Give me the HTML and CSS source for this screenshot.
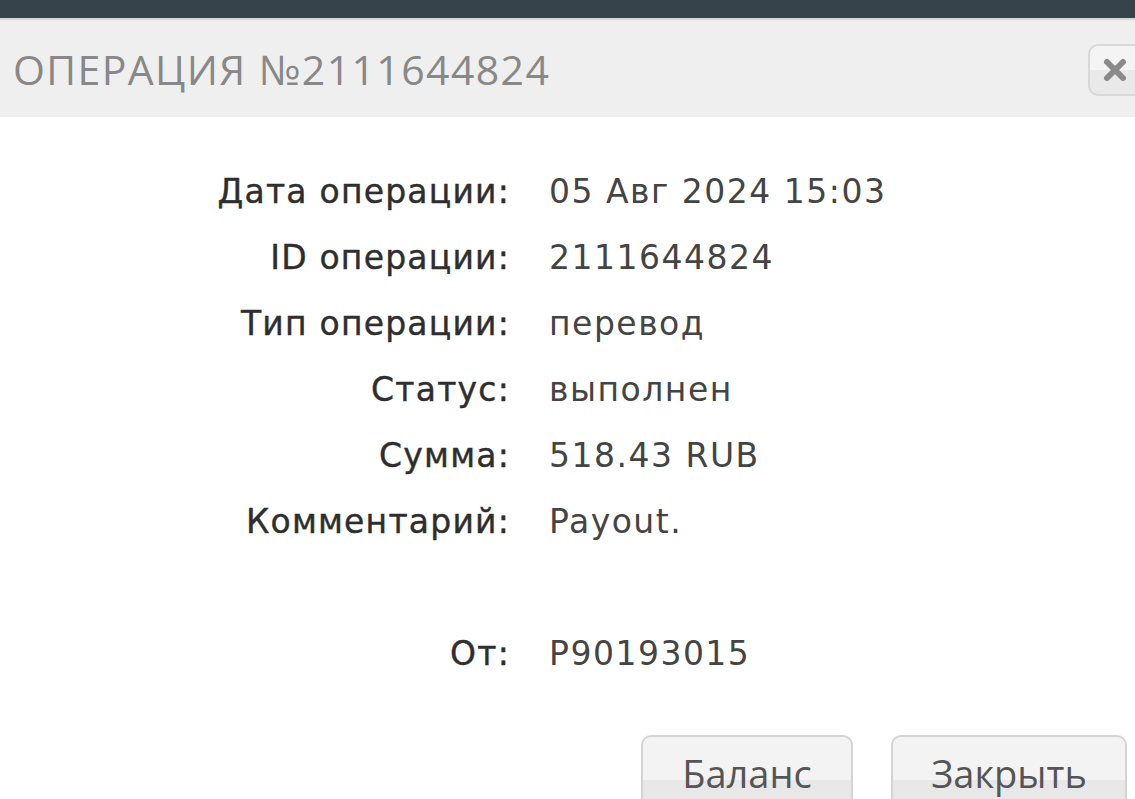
FILE: index.html
```html
<!DOCTYPE html>
<html>
<head>
    <meta charset="utf-8">
    <title>Операция №2111644824</title>
    <link rel="stylesheet" href="styles.css">
</head>
<body>

<div class="topbar"></div>

<div class="modal-header">
    <h1 class="modal-title">ОПЕРАЦИЯ №2111644824</h1>
    <button class="close-btn" title="Закрыть">
        <svg width="26" height="26" viewBox="0 0 26 26">
            <path d="M5 5 L21 21 M21 5 L5 21" stroke="#8a8a8a" stroke-width="6" stroke-linecap="round"/>
        </svg>
    </button>
</div>

<div class="modal-body">
    <dl class="details">
        <dt>Дата операции:</dt>
        <dd>05 Авг 2024 15:03</dd>
        <dt>ID операции:</dt>
        <dd>2111644824</dd>
        <dt>Тип операции:</dt>
        <dd>перевод</dd>
        <dt>Статус:</dt>
        <dd>выполнен</dd>
        <dt>Сумма:</dt>
        <dd>518.43 RUB</dd>
        <dt>Комментарий:</dt>
        <dd>Payout.</dd>
        <dt class="spacer">&nbsp;</dt>
        <dd class="spacer">&nbsp;</dd>
        <dt>От:</dt>
        <dd>P90193015</dd>
    </dl>

    <div class="actions">
        <button class="btn btn-balance">Баланс</button>
        <button class="btn btn-close">Закрыть</button>
    </div>
</div>

</body>
</html>
```

FILE: styles.css
```css
html, body {
    margin: 0;
    padding: 0;
    background: #fff;
    overflow: hidden;
}
body {
    font-family: "DejaVu Sans", "Liberation Sans", sans-serif;
}
.topbar {
    height: 18px;
    background: #36434b;
}
.modal-header {
    display: flex;
    align-items: center;
    justify-content: space-between;
    height: 97px;
    background: #efefef;
    border-top: 2px solid #d6d6d6;
    padding-left: 13px;
}
.modal-title {
    margin: 0;
    font-family: "Open Sans", sans-serif;
    font-weight: 400;
    font-size: 41px;
    letter-spacing: 1.4px;
    color: #888;
}
.close-btn {
    width: 56px;
    height: 52px;
    margin-right: -9px;
    margin-top: 2px;
    padding: 0 0 0 12px;
    display: flex;
    align-items: center;
    border: 2px solid #d8d8d8;
    border-radius: 10px;
    background: linear-gradient(#f4f4f4 50%, #e9e9e9 50%);
}
.modal-body {
    padding-top: 42px;
}
.details {
    display: grid;
    grid-template-columns: 510px auto;
    column-gap: 39px;
    margin: 0;
    font-size: 33px;
}
.details dt, .details dd {
    margin: 0;
    height: 66px;
    line-height: 66px;
}
.details dt {
    text-align: right;
    color: #2e2e2e;
    font-weight: 400;
    letter-spacing: 1.2px;
    -webkit-text-stroke: 0.4px #2e2e2e;
}
.details dd {
    color: #444;
    font-weight: 400;
    letter-spacing: 1.5px;
}
.actions {
    display: flex;
    justify-content: flex-end;
    gap: 38px;
    padding-right: 8px;
    margin-top: 48px;
}
.btn {
    height: 80px;
    padding: 10px 38px 0;
    font-family: "Open Sans", sans-serif;
    font-size: 38px;
    color: #555;
    border: 2px solid #d4d4d4;
    border-bottom: none;
    border-radius: 10px 10px 0 0;
    background: linear-gradient(#f3f3f3 55%, #e8e8e8 55%);
    display: flex;
    align-items: flex-start;
    justify-content: center;
}
.btn-balance {
    width: 212px;
}
.btn-close {
    width: 236px;
}
```
